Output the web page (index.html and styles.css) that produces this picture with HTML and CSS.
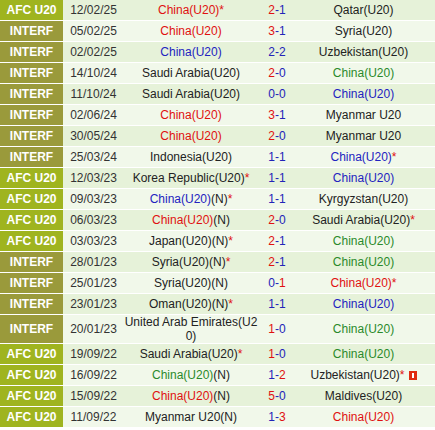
FILE: index.html
```html
<!DOCTYPE html>
<html>
<head>
<meta charset="utf-8">
<link rel="stylesheet" href="styles.css">
</head>
<body>
<div class="table">
  <div class="row odd"><div class="comp afc">AFC U20</div><div class="date">12/02/25</div><div class="team"><span class="win">China(U20)</span><span class="star">*</span></div><div class="score"><span class="w">2</span>-1</div><div class="team">Qatar(U20)</div></div>
  <div class="row even"><div class="comp inter">INTERF</div><div class="date">05/02/25</div><div class="team"><span class="win">China(U20)</span></div><div class="score"><span class="w">3</span>-1</div><div class="team">Syria(U20)</div></div>
  <div class="row odd"><div class="comp inter">INTERF</div><div class="date">02/02/25</div><div class="team"><span class="draw">China(U20)</span></div><div class="score">2-2</div><div class="team">Uzbekistan(U20)</div></div>
  <div class="row even"><div class="comp inter">INTERF</div><div class="date">14/10/24</div><div class="team">Saudi Arabia(U20)</div><div class="score"><span class="w">2</span>-0</div><div class="team"><span class="loss">China(U20)</span></div></div>
  <div class="row odd"><div class="comp inter">INTERF</div><div class="date">11/10/24</div><div class="team">Saudi Arabia(U20)</div><div class="score">0-0</div><div class="team"><span class="draw">China(U20)</span></div></div>
  <div class="row even"><div class="comp inter">INTERF</div><div class="date">02/06/24</div><div class="team"><span class="win">China(U20)</span></div><div class="score"><span class="w">3</span>-1</div><div class="team">Myanmar U20</div></div>
  <div class="row odd"><div class="comp inter">INTERF</div><div class="date">30/05/24</div><div class="team"><span class="win">China(U20)</span></div><div class="score"><span class="w">2</span>-0</div><div class="team">Myanmar U20</div></div>
  <div class="row even"><div class="comp inter">INTERF</div><div class="date">25/03/24</div><div class="team">Indonesia(U20)</div><div class="score">1-1</div><div class="team"><span class="draw">China(U20)</span><span class="star">*</span></div></div>
  <div class="row odd"><div class="comp afc">AFC U20</div><div class="date">12/03/23</div><div class="team">Korea Republic(U20)<span class="star">*</span></div><div class="score">1-1</div><div class="team"><span class="draw">China(U20)</span></div></div>
  <div class="row even"><div class="comp afc">AFC U20</div><div class="date">09/03/23</div><div class="team"><span class="draw">China(U20)</span>(N)<span class="star">*</span></div><div class="score">1-1</div><div class="team">Kyrgyzstan(U20)</div></div>
  <div class="row odd"><div class="comp afc">AFC U20</div><div class="date">06/03/23</div><div class="team"><span class="win">China(U20)</span>(N)</div><div class="score"><span class="w">2</span>-0</div><div class="team">Saudi Arabia(U20)<span class="star">*</span></div></div>
  <div class="row even"><div class="comp afc">AFC U20</div><div class="date">03/03/23</div><div class="team">Japan(U20)(N)<span class="star">*</span></div><div class="score"><span class="w">2</span>-1</div><div class="team"><span class="loss">China(U20)</span></div></div>
  <div class="row odd"><div class="comp inter">INTERF</div><div class="date">28/01/23</div><div class="team">Syria(U20)(N)<span class="star">*</span></div><div class="score"><span class="w">2</span>-1</div><div class="team"><span class="loss">China(U20)</span></div></div>
  <div class="row even"><div class="comp inter">INTERF</div><div class="date">25/01/23</div><div class="team">Syria(U20)(N)</div><div class="score">0-<span class="w">1</span></div><div class="team"><span class="win">China(U20)</span><span class="star">*</span></div></div>
  <div class="row odd"><div class="comp inter">INTERF</div><div class="date">23/01/23</div><div class="team">Oman(U20)(N)<span class="star">*</span></div><div class="score">1-1</div><div class="team"><span class="draw">China(U20)</span></div></div>
  <div class="row even"><div class="comp inter">INTERF</div><div class="date">20/01/23</div><div class="team wrap">United Arab Emirates(U20)</div><div class="score"><span class="w">1</span>-0</div><div class="team"><span class="loss">China(U20)</span></div></div>
  <div class="row odd"><div class="comp afc">AFC U20</div><div class="date">19/09/22</div><div class="team">Saudi Arabia(U20)<span class="star">*</span></div><div class="score"><span class="w">1</span>-0</div><div class="team"><span class="loss">China(U20)</span></div></div>
  <div class="row even"><div class="comp afc">AFC U20</div><div class="date">16/09/22</div><div class="team"><span class="loss">China(U20)</span>(N)</div><div class="score">1-<span class="w">2</span></div><div class="team">Uzbekistan(U20)<span class="star">*</span><span class="card"></span></div></div>
  <div class="row odd"><div class="comp afc">AFC U20</div><div class="date">15/09/22</div><div class="team"><span class="win">China(U20)</span>(N)</div><div class="score"><span class="w">5</span>-0</div><div class="team">Maldives(U20)</div></div>
  <div class="row even"><div class="comp afc">AFC U20</div><div class="date">11/09/22</div><div class="team">Myanmar U20(N)</div><div class="score">1-<span class="w">3</span></div><div class="team"><span class="win">China(U20)</span></div></div>
</div>
</body>
</html>
```

FILE: styles.css
```css
* { box-sizing: border-box; }
body {
  margin: 0;
  background: #ffffff;
  font-family: "Liberation Sans", Arial, sans-serif;
  font-size: 12px;
  color: #222222;
}
.table {
  display: flex;
  flex-direction: column;
  gap: 1px;
  width: 435px;
}
.row {
  display: grid;
  grid-template-columns: 64px 59px 136px 36px 137px;
  min-height: 20px;
  line-height: 14px;
}
.row.odd { background: #e6f2d9; }
.row.even { background: #f1f8ea; }
.row > div {
  display: flex;
  align-items: center;
  justify-content: center;
  text-align: center;
}
.comp {
  color: #ffffff;
  font-weight: bold;
  margin-right: 1px;
}
.comp.afc { background: #9fb41f; }
.comp.inter { background: #9a9a3b; }
.date { color: #333333; }
.team.wrap {
  display: block;
  word-break: break-all;
  padding-top: 0;
}
.row > .team.wrap { display: block; }
.score { color: #2323b8; }
.score .w { color: #e01010; }
.win { color: #e01010; }
.draw { color: #2323c0; }
.loss { color: #2a8a2a; }
.star { color: #e01010; }
.card {
  display: inline-block;
  width: 8px;
  height: 9px;
  margin-left: 4px;
  background: #e02c10;
  position: relative;
}
.card::after {
  content: "";
  position: absolute;
  left: 3px;
  top: 2px;
  width: 2px;
  height: 5px;
  background: #ffffff;
}
```
